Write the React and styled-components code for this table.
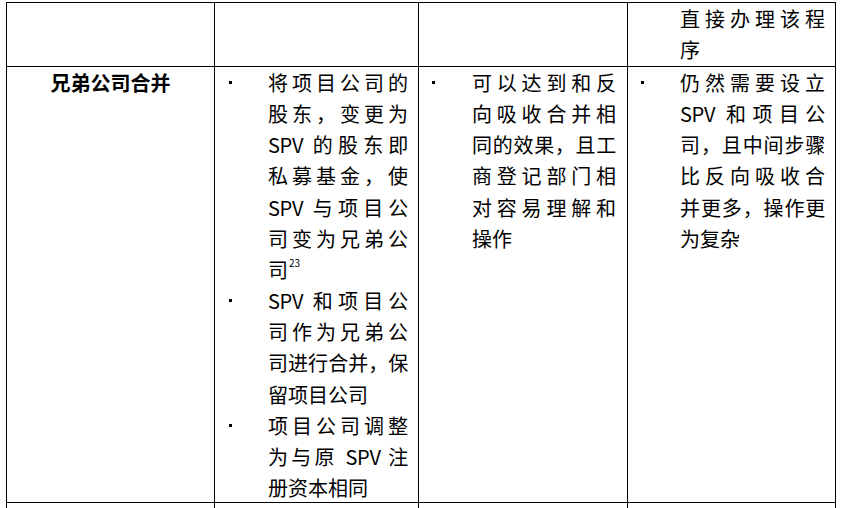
import React from "react";
import styled, { createGlobalStyle } from "styled-components";

const Global = createGlobalStyle`
  html, body { margin: 0; padding: 0; background: #fff; }
  body { width: 845px; height: 508px; overflow: hidden; }
`;

const Page = styled.div`
  padding: 2px 0 0 6px;
  height: 508px;
  box-sizing: border-box;
  overflow: hidden;
  font-family: "Noto Sans CJK SC", "Noto Sans", sans-serif;
  font-size: 20px;
  color: #000;
`;

const Table = styled.div`
  display: grid;
  grid-template-columns: 208px 204px 209px 208px;
  grid-template-rows: 64px 436px 40px;
  border-left: 1px solid #000;
  border-top: 1px solid #000;
  width: max-content;
`;

const Cell = styled.div`
  box-sizing: border-box;
  border-right: 1px solid #000;
  border-bottom: 1px solid #000;
  padding: ${(p) => p.$pad || "0"};
  line-height: 31.15px;
`;

const TitleCell = styled(Cell)`
  font-weight: 700;
  text-align: center;
  padding-top: 0;
`;

const Item = styled.div`
  display: grid;
  grid-template-columns: ${(p) => p.$indent}px 1fr;
`;

const Mark = styled.div`
  height: 31.15px;
  padding-left: ${(p) => p.$dot}px;
  display: flex;
  align-items: center;
`;

const Dot = styled.span`
  width: 3px;
  height: 3px;
  background: #000;
  margin-top: 0;
`;

const Line = styled.div`
  white-space: nowrap;
  text-align: ${(p) => (p.$last ? "left" : "justify")};
  text-align-last: ${(p) => (p.$last ? "left" : "justify")};
  text-justify: inter-character;
  letter-spacing: ${(p) => (p.$tight ? "-0.3px" : "0")};
`;

const Sup = styled.sup`
  font-size: 10px;
  line-height: 0;
  vertical-align: 0;
  position: relative;
  top: -11px;
  margin-left: 1px;
`;

const Lines = ({ lines }) => (
  <div>
    {lines.map((l, i) => (
      <Line
        key={i}
        $last={i === lines.length - 1}
        $tight={typeof l.text === "string" && l.text.length >= 7}
      >
        {l.text}
      </Line>
    ))}
  </div>
);

const mk = (arr) => arr.map((t) => ({ text: t }));

const Bullet = ({ indent, dot, lines }) => (
  <Item $indent={indent}>
    <Mark $dot={dot}>
      <Dot />
    </Mark>
    <Lines lines={lines} />
  </Item>
);

export default function App() {
  return (
    <>
      <Global />
      <Page>
        <Table>
          <Cell />
          <Cell />
          <Cell />
          <Cell $pad="0 10px 0 52px">
            <Lines lines={mk(["直接办理该程", "序"])} />
          </Cell>

          <TitleCell>兄弟公司合并</TitleCell>
          <Cell $pad="0 10px 0 0">
            <Bullet
              indent={53}
              dot={14}
              lines={[
                ...mk([
                  "将项目公司的",
                  "股东，变更为",
                  "SPV 的股东即",
                  "私募基金，使",
                  "SPV 与项目公",
                  "司变为兄弟公",
                ]),
                {
                  text: (
                    <>
                      司<Sup>23</Sup>
                    </>
                  ),
                },
              ]}
            />
            <Bullet
              indent={53}
              dot={14}
              lines={mk(["SPV 和项目公", "司作为兄弟公", "司进行合并，保", "留项目公司"])}
            />
            <Bullet
              indent={53}
              dot={14}
              lines={mk(["项目公司调整", "为与原 SPV 注", "册资本相同"])}
            />
          </Cell>
          <Cell $pad="0 11px 0 0">
            <Bullet
              indent={53}
              dot={13}
              lines={mk([
                "可以达到和反",
                "向吸收合并相",
                "同的效果，且工",
                "商登记部门相",
                "对容易理解和",
                "操作",
              ])}
            />
          </Cell>
          <Cell $pad="0 10px 0 0">
            <Bullet
              indent={52}
              dot={13}
              lines={mk([
                "仍然需要设立",
                "SPV 和项目公",
                "司，且中间步骤",
                "比反向吸收合",
                "并更多，操作更",
                "为复杂",
              ])}
            />
          </Cell>

          <Cell />
          <Cell />
          <Cell />
          <Cell />
        </Table>
      </Page>
    </>
  );
}
